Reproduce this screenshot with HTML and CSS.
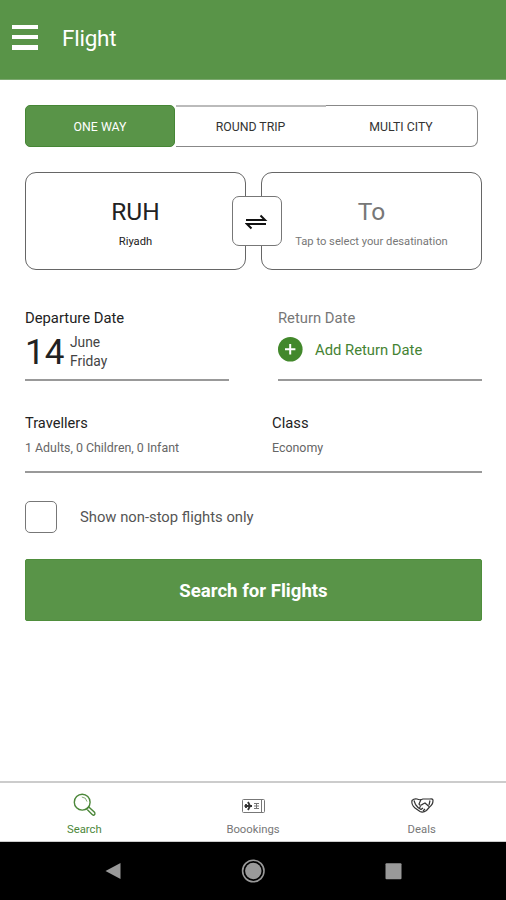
FILE: index.html
```html
<!DOCTYPE html>
<html lang="en">
<head>
<meta charset="utf-8">
<title>Flight</title>
<link rel="stylesheet" href="styles.css">
</head>
<body>
<div class="app">
  <header class="header">
    <div class="menu"><i></i><i></i><i></i></div>
    <h1 class="title">Flight</h1>
  </header>
  <main class="main">
    <nav class="tabs">
      <span class="tab active">ONE WAY</span>
      <span class="tab round">ROUND TRIP</span>
      <span class="tab multi">MULTI CITY</span>
    </nav>
    <section class="route">
      <div class="place"><span class="code">RUH</span><span class="city from">Riyadh</span></div>
      <div class="place to"><span class="code">To</span><span class="city">Tap to select your desatination</span></div>
      <div class="swap">
        <svg width="24" height="20" viewBox="0 0 24 20" fill="none" stroke="#111" stroke-width="2"><path d="M1 9H20L15.5 4.5M21 13H2L6.5 17.5"/></svg>
      </div>
    </section>
    <section class="dates">
      <div class="date">
        <span class="label departure">Departure Date</span>
        <div class="date-value"><span class="day">14</span><div class="month"><span>June</span><span>Friday</span></div></div>
      </div>
      <div class="date">
        <span class="label muted">Return Date</span>
        <div class="add">
          <svg width="26" height="26" viewBox="0 0 26 26"><circle cx="13.3" cy="13.3" r="12.3" fill="#42882b"/><path d="M8 13.3H18.4M13.2 8.1V18.5" stroke="#fff" stroke-width="2"/></svg>
          <span class="add-text">Add Return Date</span>
        </div>
      </div>
    </section>
    <section class="details">
      <div class="detail"><span class="label travellers">Travellers</span><span class="info">1 Adults, 0 Children, 0 Infant</span></div>
      <div class="detail"><span class="label class">Class</span><span class="info economy">Economy</span></div>
    </section>
    <div class="option"><span class="box"></span><span class="option-text">Show non-stop flights only</span></div>
    <div class="submit"><span>Search for Flights</span></div>
  </main>
  <nav class="bottom">
    <div class="item current">
      <svg width="26" height="26" viewBox="0 0 26 26" fill="none" stroke="#4c873a" stroke-width="1.4"><circle cx="11.2" cy="10.2" r="7.9"/><path d="M10.8 5Q15.3 5.3 16 9.6" stroke-width=".7"/><path d="M15.7 17L17.8 14.9L23.7 20.5Q24.5 22.2 23.2 23Q22 23.6 20.9 22.3Z"/></svg>
      <span>Search</span>
    </div>
    <div class="item">
      <svg width="26" height="26" viewBox="0 0 26 26" fill="none" stroke="#777" stroke-width="1"><rect x="2.5" y="7.5" width="22" height="13" rx="1"/><path d="M4.5 14H12M8 10L10 14L8 18M6 12V16" stroke="#333" stroke-width="1.8"/><path d="M14 11.5H19M14 14H19M14 16.5H19M16.5 11V17M21.5 8V20"/></svg>
      <span class="bookings">Boookings</span>
    </div>
    <div class="item">
      <svg width="26" height="26" viewBox="0 -0.5 26 26" fill="none" stroke="#333" stroke-width="1.2"><path d="M3 8Q5 6 8 6.5Q11 8 14 6.5H21Q24 6 24 8Q24 12 20.5 14.5L17.5 18Q14 20.5 11 19L6 15.5Q2 12 3 8Z"/><path d="M5 8L6.5 12M21 8L20 12.5M12 7L10 11.5Q11 14 14 11.5L16 10.5L20 14M6.5 12L9 15L12 17M10 15L12 14M12 17L14 15.5M14 18.5L16 16.5"/></svg>
      <span class="deals">Deals</span>
    </div>
  </nav>
  <footer class="system">
    <div><svg width="26" height="26" viewBox="0 0 26 26"><path d="M5.5 13L20.5 5V21Z" fill="#999"/></svg></div>
    <div><svg width="26" height="26" viewBox="0 0 26 26"><circle cx="13.3" cy="13" r="8.2" fill="#999"/><circle cx="13.3" cy="13" r="10.7" fill="none" stroke="#999" stroke-width="1.6"/></svg></div>
    <div><svg width="26" height="26" viewBox="0 0 26 26"><rect x="5.5" y="5.2" width="16" height="16" rx="1" fill="#999"/></svg></div>
  </footer>
</div>
</body>
</html>
```
FILE: styles.css
```css
* { box-sizing: border-box; }
body { margin: 0; font-family: Roboto, "Liberation Sans", sans-serif; color: #222; background: #fff; }
svg { display: block; flex: none; }
.app { width: 506px; height: 900px; display: flex; flex-direction: column; }
.header { height: 80px; flex: none; display: flex; background: #599448; border-bottom: 1px solid #7da970; padding: 25px 12px; }
.menu { width: 26px; display: flex; flex-direction: column; gap: 6px; }
.menu i { height: 4px; background: #fff; }
.menu i:last-child { height: 5px; }
.title { margin: 0 0 0 24px; font-size: 22.5px; line-height: 26px; letter-spacing: -.25px; font-weight: 400; color: #fff; }
.main { flex: 1; padding: 25px 24px 0 25px; }
.tabs { display: flex; width: 453px; height: 42px; font-size: 12.3px; text-align: center; color: #333; }
.tab { width: 150px; height: 42px; border: 1px solid #888; border-width: 1px 0; line-height: 42px; }
.tab.active { background: #599448; color: #fff; border: 1px solid #468635; border-radius: 5px; }
.tab.round { margin-left: 1px; border-width: 2px 0 1px; border-top-color: #bbb; line-height: 40px; padding-right: 1px; }
.tab.multi { width: 152px; border-right-width: 1px; border-radius: 0 7px 7px 0; padding-right: 1px; }
.route { position: relative; margin-top: 25px; display: flex; gap: 15px; }
.place { width: 221px; height: 98px; border: 1.4px solid #666; border-radius: 11px; display: flex; flex-direction: column; align-items: center; padding-top: 24px; }
.code { font-size: 24.5px; line-height: 30px; }
.city { font-size: 11.2px; line-height: 16px; margin-top: 7px; }
.to { color: #777; }
.swap { position: absolute; left: 207px; top: 24px; width: 50px; height: 50px; border: 1px solid #777; border-radius: 7px; background: #fff; display: flex; align-items: center; justify-content: center; }
.dates { display: flex; justify-content: space-between; width: 457px; margin-top: 38px; }
.date { width: 204px; height: 73px; border-bottom: 2px solid #999; }
.label { display: block; font-size: 14.8px; line-height: 20px; }
.travellers { font-size: 14.6px; }
.muted { color: #777; }
.date-value { display: flex; height: 42px; align-items: center; padding-top: 5px; }
.day { width: 45px; font-size: 35px; line-height: 42px; padding-top: 2px; }
.month { font-size: 13.8px; line-height: 19px; display: flex; flex-direction: column; color: #444; }
.add { display: flex; align-items: center; gap: 12px; margin: 8px 0 0 -1px; color: #458333; font-size: 14.8px; }
.add-text { padding-top: 2px; }
.details { display: flex; width: 457px; height: 60px; margin-top: 32px; border-bottom: 2px solid #999; }
.detail { width: 247px; flex: none; }
.info { display: block; font-size: 12.4px; line-height: 16px; margin-top: 7px; color: #666; }
.option { display: flex; align-items: center; height: 32px; margin-top: 28px; font-size: 14.8px; color: #555; }
.box { width: 32px; height: 32px; margin-right: 23px; border: 1px solid #777; border-radius: 5px; }
.submit { width: 457px; height: 62px; margin-top: 26px; background: #599448; border: 1px solid #4f8e3c; border-radius: 2px; color: #fff; font-size: 18.6px; font-weight: 700; line-height: 63px; text-align: center; }
.bottom { height: 61px; flex: none; display: flex; border-top: 2px solid #ccc; border-bottom: 1px solid #ccc; }
.item { flex: 1; display: flex; flex-direction: column; align-items: center; padding-top: 9px; font-size: 11.3px; line-height: 16px; color: #777; }
.item span { margin-top: 4px; }
.item.current { color: #4c873a; }
.system { height: 58px; flex: none; background: #000; display: flex; justify-content: center; gap: 114px; padding-top: 16px; }
```
